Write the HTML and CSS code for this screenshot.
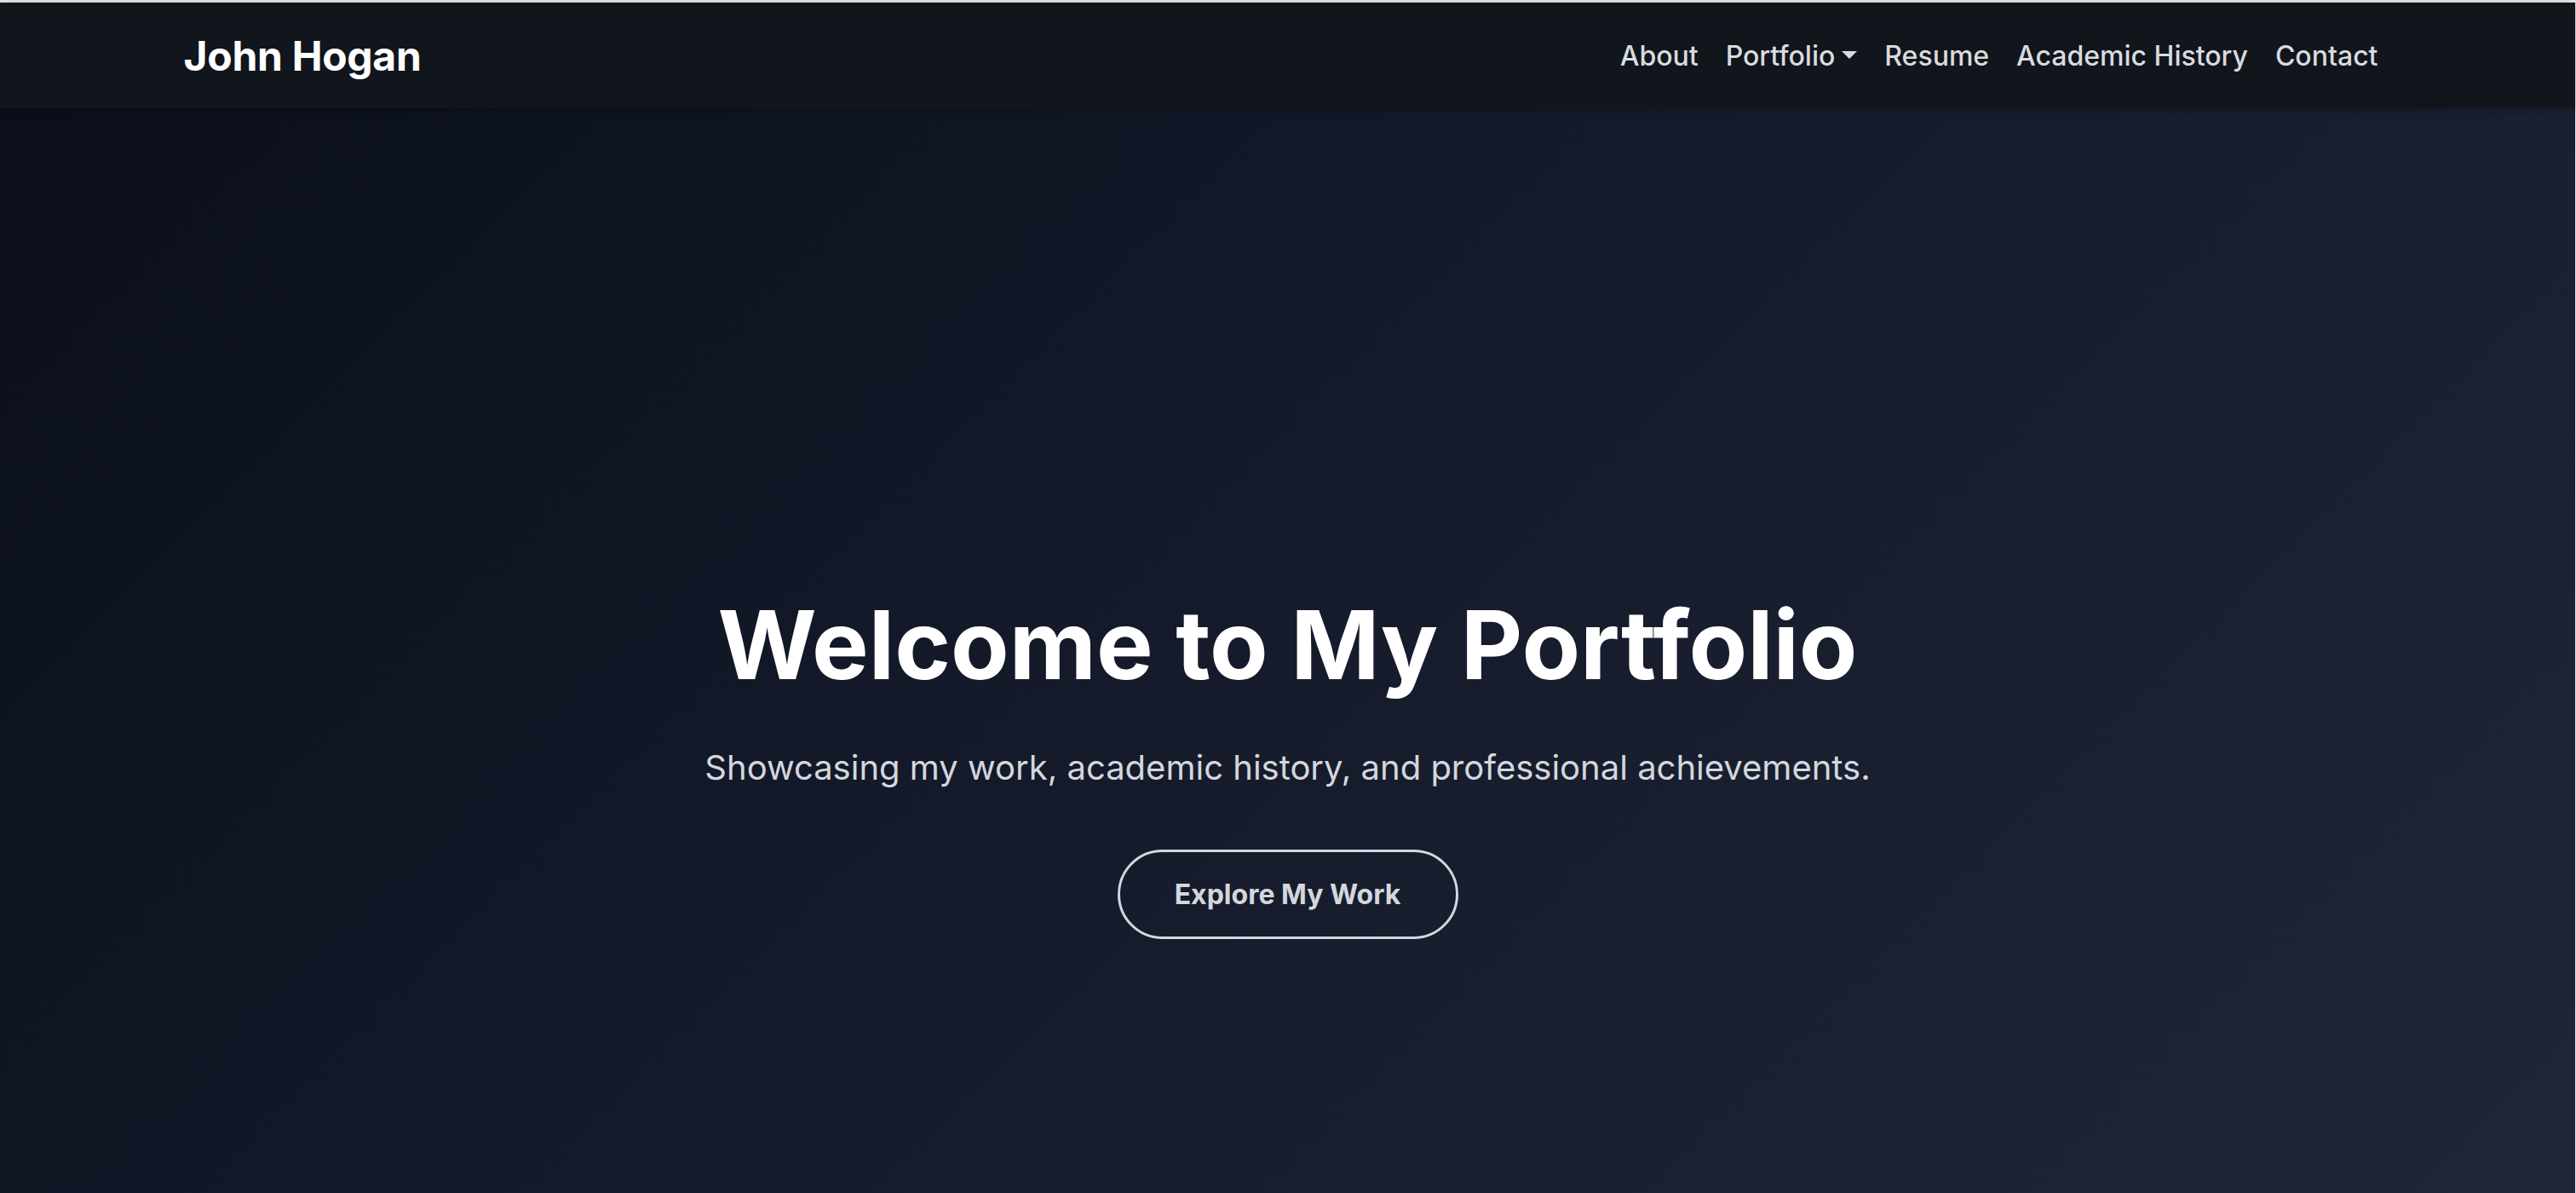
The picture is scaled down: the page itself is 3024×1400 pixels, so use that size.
FILE: index.html
```html
<!DOCTYPE html>
<html lang="en">
<head>
<meta charset="utf-8">
<title>John Hogan - Portfolio</title>
<link rel="stylesheet" href="styles.css">
</head>
<body>
<div class="frame">
  <nav class="navbar">
    <div class="container nav-inner">
      <a class="brand" href="#">John Hogan</a>
      <ul class="nav-links">
        <li><a href="#">About</a></li>
        <li><a href="#" class="dropdown-toggle">Portfolio</a></li>
        <li><a href="#">Resume</a></li>
        <li><a href="#">Academic History</a></li>
        <li><a href="#">Contact</a></li>
      </ul>
    </div>
  </nav>
  <section class="hero">
    <h1 class="hero-title">Welcome to My Portfolio</h1>
    <p class="hero-lead">Showcasing my work, academic history, and professional achievements.</p>
    <a class="btn-outline" href="#">Explore My Work</a>
  </section>
</div>
</body>
</html>
```

FILE: styles.css
```css
* { box-sizing: border-box; }
html, body {
  margin: 0;
  padding: 0;
  height: 100%;
}
body {
  background: #e6e6e6;
  font-family: Inter, "Noto Sans", sans-serif;
  overflow: hidden;
}
.frame {
  margin-top: 3px;
  margin-right: 1px;
  height: 1397px;
  display: flex;
  flex-direction: column;
  background: linear-gradient(135deg, #0a0e1b 0%, #151b2b 50%, #1f2637 100%);
}
.navbar {
  height: 124px;
  background: #11151c;
  box-shadow: 0 2px 8px rgba(0,0,0,0.25);
  flex-shrink: 0;
}
.container {
  width: 2640px;
  margin: 0 auto;
  padding: 0 24px;
}
.nav-inner {
  height: 100%;
  display: flex;
  align-items: center;
  justify-content: space-between;
}
.brand {
  color: #ffffff;
  text-decoration: none;
  font-weight: 700;
  font-size: 48px;
  letter-spacing: -0.3px;
}
.nav-links {
  list-style: none;
  margin: 0;
  padding: 0;
  display: flex;
}
.nav-links a {
  display: block;
  padding: 8px 16px;
  color: #d9dbdf;
  text-decoration: none;
  font-size: 32px;
  font-weight: 500;
}
.dropdown-toggle::after {
  content: "";
  display: inline-block;
  margin-left: 8px;
  vertical-align: 8px;
  border-top: 9px solid currentColor;
  border-left: 9px solid transparent;
  border-right: 9px solid transparent;
}
.hero {
  flex: 1;
  display: flex;
  flex-direction: column;
  align-items: center;
  padding-top: 562px;
  text-align: center;
}
.hero-title {
  margin: 0 0 48px;
  color: #ffffff;
  font-size: 112px;
  line-height: 1.2;
  font-weight: 700;
  letter-spacing: 0;
}
.hero-lead {
  margin: 0 0 66px;
  color: #d4d7dd;
  font-size: 40px;
  line-height: 1.5;
  font-weight: 400;
}
.btn-outline {
  display: flex;
  align-items: center;
  justify-content: center;
  width: 400px;
  height: 105px;
  border: 3px solid #d4d7dd;
  border-radius: 60px;
  color: #d4d7dd;
  text-decoration: none;
  font-size: 32px;
  font-weight: 700;
}
```
